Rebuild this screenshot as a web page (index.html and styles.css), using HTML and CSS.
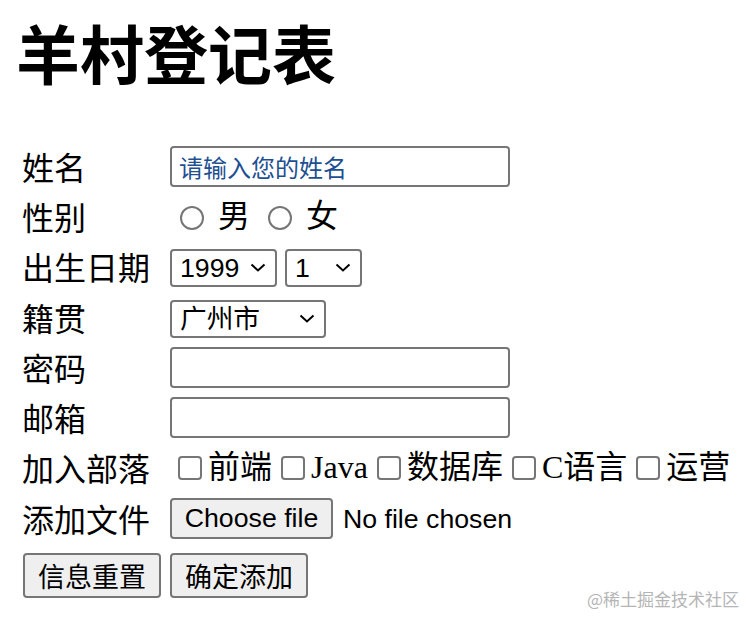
FILE: index.html
```html
<!DOCTYPE html>
<html lang="zh-CN">
<head>
    <meta charset="UTF-8">
    <meta name="viewport" content="width=device-width, initial-scale=1.0">
    <title>羊村登记表</title>
    <link rel="stylesheet" href="styles.css">
</head>
<body>

<div class="page">
    <h1 class="title">羊村登记表</h1>

    <form class="reg-form">
        <table class="reg-table">
            <tr>
                <td class="label">姓名</td>
                <td><input type="text" class="text-input" placeholder="请输入您的姓名"></td>
            </tr>
            <tr>
                <td class="label">性别</td>
                <td class="radios">
                    <label><input type="radio" name="sex"> 男</label>
                    <label><input type="radio" name="sex"> 女</label>
                </td>
            </tr>
            <tr>
                <td class="label">出生日期</td>
                <td>
                    <span class="select-wrap">
                        <select class="select sel-year"><option>1999</option></select>
                        <svg class="chev" width="16" height="9" viewBox="0 0 16 9"><polyline points="1.5,1.5 8,7.5 14.5,1.5" /></svg>
                    </span>
                    <span class="select-wrap">
                        <select class="select sel-month"><option>1</option></select>
                        <svg class="chev" width="16" height="9" viewBox="0 0 16 9"><polyline points="1.5,1.5 8,7.5 14.5,1.5" /></svg>
                    </span>
                </td>
            </tr>
            <tr>
                <td class="label">籍贯</td>
                <td>
                    <span class="select-wrap">
                        <select class="select sel-city"><option>广州市</option></select>
                        <svg class="chev" width="16" height="9" viewBox="0 0 16 9"><polyline points="1.5,1.5 8,7.5 14.5,1.5" /></svg>
                    </span>
                </td>
            </tr>
            <tr>
                <td class="label">密码</td>
                <td><input type="password" class="text-input"></td>
            </tr>
            <tr>
                <td class="label">邮箱</td>
                <td><input type="email" class="text-input"></td>
            </tr>
            <tr>
                <td class="label">加入部落</td>
                <td class="checks"><label><input type="checkbox">前端</label><label><input type="checkbox">Java</label><label><input type="checkbox">数据库</label><label><input type="checkbox">C语言</label><label><input type="checkbox">运营</label></td>
            </tr>
            <tr>
                <td class="label">添加文件</td>
                <td class="file-cell">
                    <label class="file-btn">Choose file<input type="file" hidden></label>
                    <span class="file-name">No file chosen</span>
                </td>
            </tr>
            <tr class="btn-row">
                <td><button type="reset" class="btn btn-reset">信息重置</button></td>
                <td><button type="submit" class="btn">确定添加</button></td>
            </tr>
        </table>
    </form>
</div>

<div class="watermark">@稀土掘金技术社区</div>

</body>
</html>
```

FILE: styles.css
```css
body {
    margin: 0;
    font-family: 'Liberation Serif', 'Noto Sans CJK SC', serif;
    color: #000;
    background-color: #fff;
}

.page {
    padding-left: 18px;
}

.title {
    font-family: 'Noto Sans CJK SC', sans-serif;
    font-size: 64px;
    font-weight: 700;
    line-height: 64px;
    margin: 19px 0 0 -2px;
}

.reg-table {
    margin-top: 56px;
    border-spacing: 4px;
    font-size: 32px;
}

.reg-table td {
    height: 46.25px;
    padding: 0;
    line-height: 1.2;
    white-space: nowrap;
}

.label {
    width: 144px;
    font-family: 'Noto Sans CJK SC', sans-serif;
}

.text-input {
    box-sizing: border-box;
    width: 340px;
    height: 41px;
    border: 2px solid #767676;
    border-radius: 4px;
    padding: 0 7px;
    font-family: 'Noto Sans CJK SC', sans-serif;
    font-size: 24px;
    display: block;
}

.text-input::placeholder {
    color: #1d4f91;
}

/* radios */
.radios input {
    appearance: none;
    box-sizing: border-box;
    width: 24px;
    height: 24px;
    margin: 0 6px 0 10px;
    border: 2px solid #767676;
    border-radius: 50%;
    vertical-align: -3px;
}

/* selects */
.select-wrap {
    position: relative;
    display: inline-block;
    vertical-align: middle;
}

.select {
    appearance: none;
    box-sizing: border-box;
    height: 38px;
    border: 2px solid #767676;
    border-radius: 4px;
    background-color: #fff;
    color: #000;
    padding: 0 0 0 8px;
    font-family: 'Liberation Sans', 'Noto Sans CJK SC', sans-serif;
    font-size: 26.7px;
    display: block;
}

.sel-year {
    width: 107px;
}

.sel-month {
    width: 77px;
}

.sel-city {
    width: 156px;
}

.chev {
    position: absolute;
    right: 11px;
    top: 14px;
    fill: none;
    stroke: #000;
    stroke-width: 2;
    pointer-events: none;
}

/* checkboxes */
.checks input {
    appearance: none;
    box-sizing: border-box;
    width: 24px;
    height: 24px;
    margin: 0 6px 0 9px;
    border: 2px solid #767676;
    border-radius: 4px;
    vertical-align: -2px;
}

.checks label:first-child input {
    margin-left: 8px;
}

/* file */
.file-btn {
    display: inline-block;
    box-sizing: border-box;
    width: 163px;
    height: 41px;
    line-height: 37px;
    text-align: center;
    border: 2px solid #767676;
    border-radius: 4px;
    background-color: #efefef;
    font-family: 'Liberation Sans', sans-serif;
    font-size: 26.7px;
    vertical-align: middle;
}

.file-name {
    font-family: 'Liberation Sans', sans-serif;
    font-size: 26.7px;
    margin-left: 2px;
    vertical-align: middle;
}

/* buttons */
.btn-row td {
    vertical-align: bottom;
    height: 53px;
}

.btn {
    box-sizing: border-box;
    height: 45px;
    padding: 0 13px;
    border: 2px solid #767676;
    border-radius: 4px;
    background-color: #efefef;
    color: #000;
    font-family: 'Noto Sans CJK SC', sans-serif;
    font-size: 27px;
    line-height: 1;
    display: block;
}

.btn-reset {
    margin-left: 1px;
}

.watermark {
    position: absolute;
    right: 17px;
    bottom: 14px;
    font-family: 'Noto Sans CJK SC', sans-serif;
    font-size: 17px;
    color: #b5b5b5;
}
```
